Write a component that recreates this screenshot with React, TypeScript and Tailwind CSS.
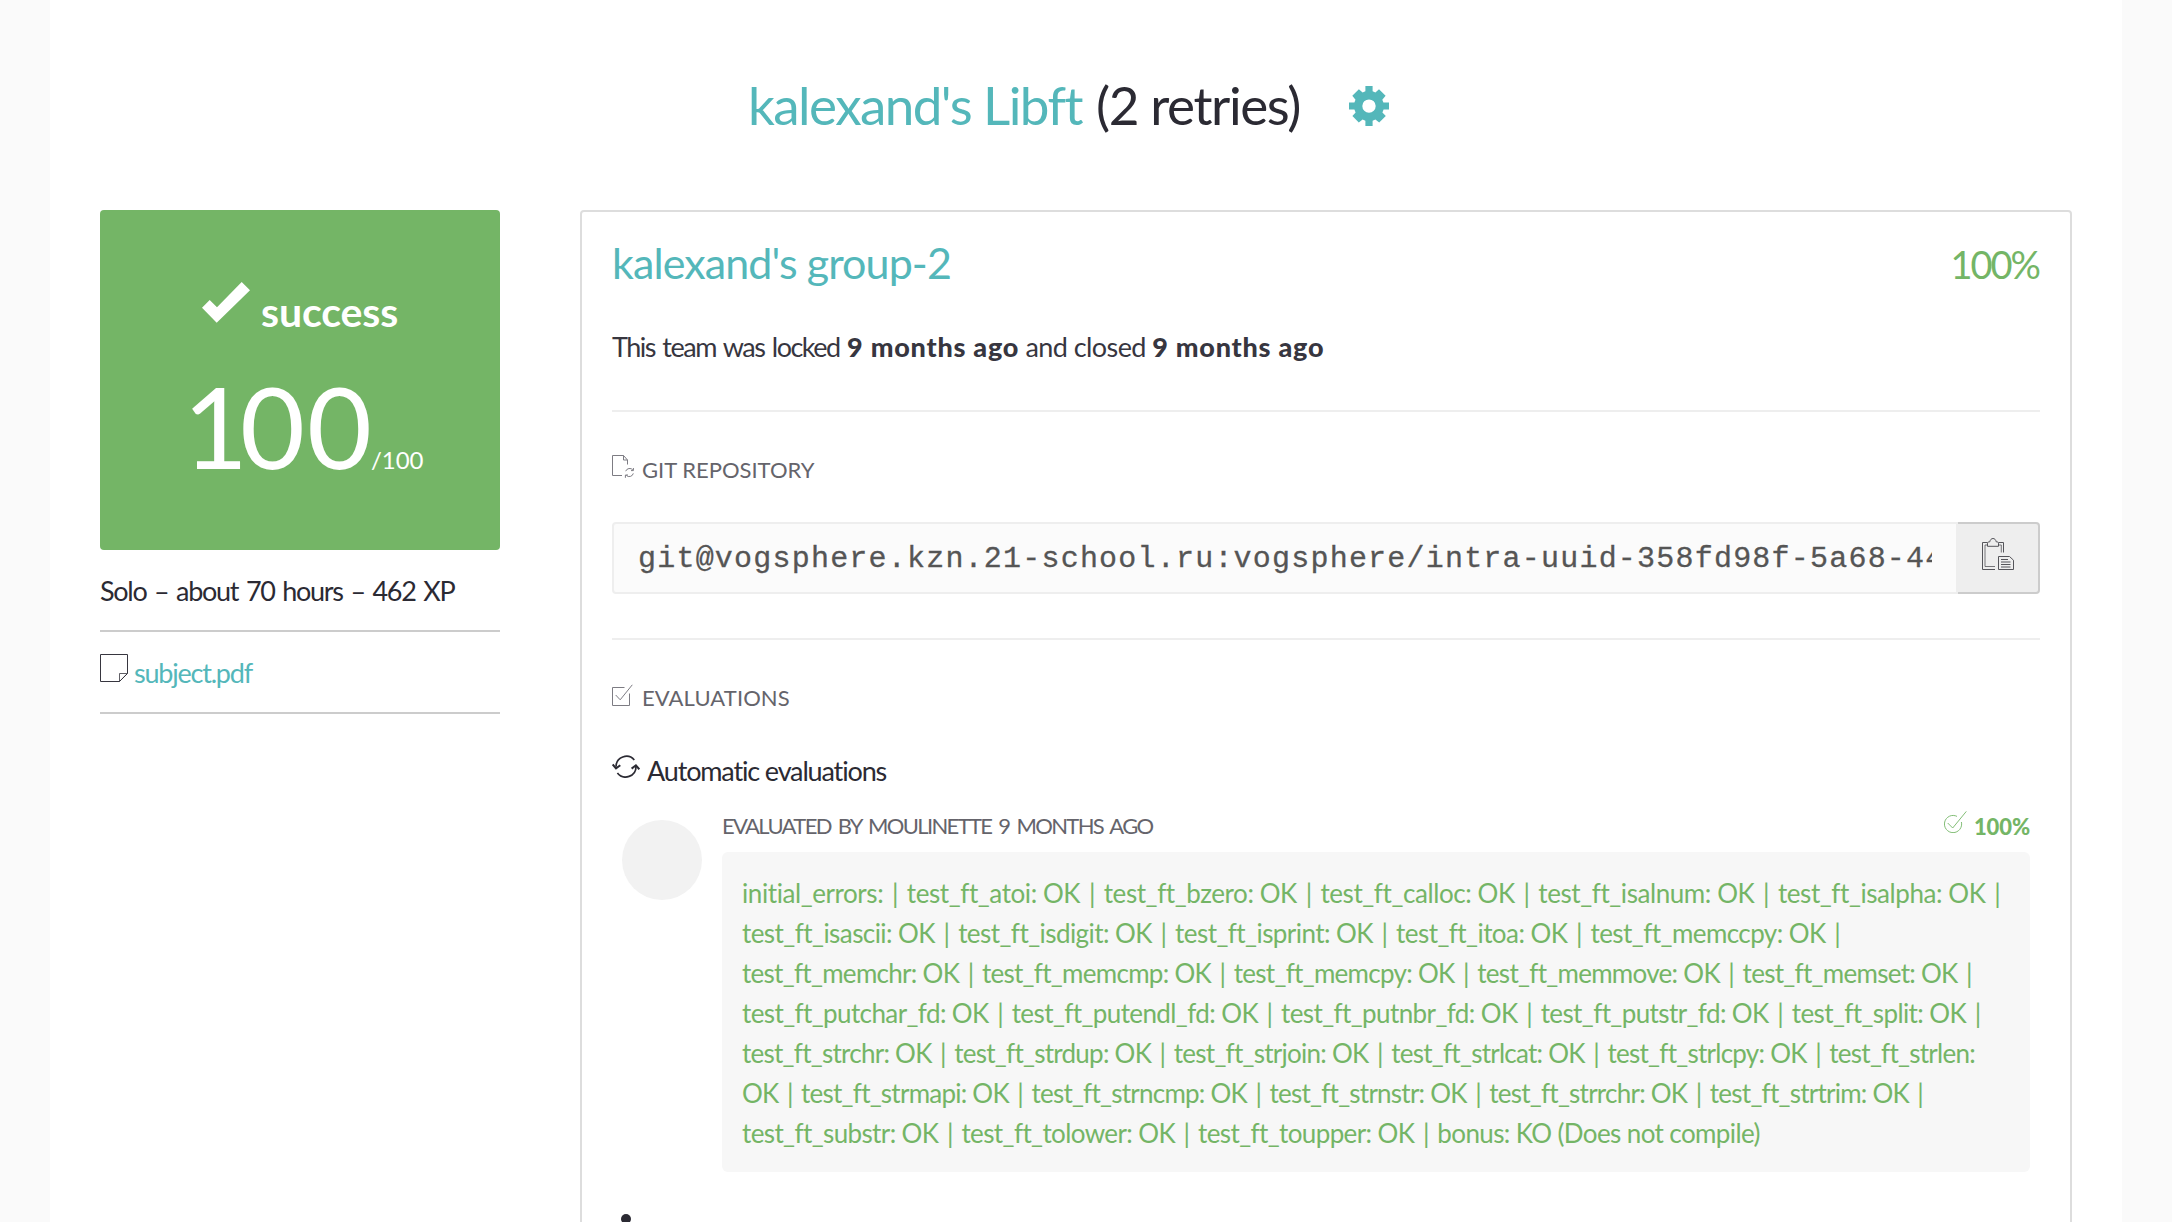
import type { ReactNode } from "react";

const MOULINETTE_LINES = [
  { text: "initial_errors: | test_ft_atoi: OK | test_ft_bzero: OK | test_ft_calloc: OK | test_ft_isalnum: OK | test_ft_isalpha: OK |", tracking: "tracking-[-0.42px]" },
  { text: "test_ft_isascii: OK | test_ft_isdigit: OK | test_ft_isprint: OK | test_ft_itoa: OK | test_ft_memccpy: OK |", tracking: "tracking-[-0.56px]" },
  { text: "test_ft_memchr: OK | test_ft_memcmp: OK | test_ft_memcpy: OK | test_ft_memmove: OK | test_ft_memset: OK |", tracking: "tracking-[-0.71px]" },
  { text: "test_ft_putchar_fd: OK | test_ft_putendl_fd: OK | test_ft_putnbr_fd: OK | test_ft_putstr_fd: OK | test_ft_split: OK |", tracking: "tracking-[-0.6px]" },
  { text: "test_ft_strchr: OK | test_ft_strdup: OK | test_ft_strjoin: OK | test_ft_strlcat: OK | test_ft_strlcpy: OK | test_ft_strlen:", tracking: "tracking-[-0.74px]" },
  { text: "OK | test_ft_strmapi: OK | test_ft_strncmp: OK | test_ft_strnstr: OK | test_ft_strrchr: OK | test_ft_strtrim: OK |", tracking: "tracking-[-0.76px]" },
  { text: "test_ft_substr: OK | test_ft_tolower: OK | test_ft_toupper: OK | bonus: KO (Does not compile)", tracking: "tracking-[-0.61px]" },
];

function GearIcon() {
  return (
    <svg viewBox="0 0 40 40" className="h-10 w-10 shrink-0 fill-[#54b7ba]">
      <path
        fillRule="evenodd"
        d="M16.4 0h7.2v5.2l2.8 1.2 3.6-3.2 6.6 6.6-3.3 4 1.1 2.6H40v7.2h-5.4l-1.2 2.8 3.4 3.7-6.6 6.3-3.8-2.8-2.8 1.2V40h-7.2v-5.2l-2.8-1.2-3.8 2.8-6.4-6.3 3.2-3.7-1.2-2.8H0v-7.2h5.4l1.1-2.6-3.2-4 6.6-6.6 3.7 3.2 2.8-1.2zM20 13.4a6.7 6.7 0 1 0 0 13.4 6.7 6.7 0 0 0 0-13.4z"
      />
    </svg>
  );
}

function CheckMark() {
  return (
    <svg viewBox="0 0 48 41" className="mt-[72px] h-[41px] w-12 shrink-0 fill-white">
      <path d="M39.7 0 48 8.3 14.7 40.8 0 25.8 7.7 18l7.3 7.2z" />
    </svg>
  );
}

function NoteIcon() {
  return (
    <svg viewBox="0 0 28 28" className="mt-[22px] h-7 w-7 shrink-0 fill-none stroke-[#37363f]">
      <path d="M.5.5h27v19l-8 8H.5z" />
      <path strokeWidth="0.8" d="M19.5 27.5v-8h8M19.5 27.5l7-7.2" />
    </svg>
  );
}

function FileSyncIcon() {
  return (
    <svg viewBox="0 0 23 24" className="-mt-[1px] h-6 w-[23px] shrink-0 fill-none stroke-[#7d7c83]">
      <path d="M10 20.5H.5V.5h11l4 4.5v4.5M11.5.5V5h4" />
      <path d="M13.7 16.2a4.2 4.2 0 0 1 7.2-1.2M21.3 18.4a4.2 4.2 0 0 1-7 2M21.4 13v2.6H19M13.4 22.8V20H16" />
    </svg>
  );
}

function CheckBoxIcon() {
  return (
    <svg viewBox="0 0 22 22" className="h-[22px] w-[22px] shrink-0 fill-none stroke-[#7d7c83]">
      <path d="M12.5 3.5H.5v18h17v-12" />
      <path d="m3.7 11 4.5 4.8L20.3.8" />
    </svg>
  );
}

function SyncIcon() {
  return (
    <svg viewBox="0 0 28 23" className="mt-[5px] h-[23px] w-7 shrink-0 fill-none stroke-[#2b2a33] stroke-[1.7]">
      <path d="M22.3 5A10.4 10.4 0 0 0 4 11.8M5.4 18a10.4 10.4 0 0 0 18.6-6.6" />
      <path strokeWidth="2" d="M.7 9.5 4 13.3l4.3-3M19.6 13.6l4.3-3.3 3.4 4" />
    </svg>
  );
}

function ClipboardIcon() {
  return (
    <svg viewBox="0 0 32 32" className="mt-[14px] h-8 w-8 shrink-0 fill-none stroke-[#55555a]">
      <path d="M13 31.5H.5v-27h5M16.5 4.5h5v10" />
      <path strokeWidth="0.8" d="M13 28.5H3V7h2.5M17 7h2.3v7.5" />
      <path d="M5.5 8.3V5.2c0-1 1-1.4 2.3-1.4C8.2 1.7 9.4.5 11 .5s2.8 1.2 3.2 3.3c1.4 0 2.3.4 2.3 1.4v3.1z" />
      <path d="M16.5 18.5h11l4 3.7v9.3h-15zM19 21.5h7M19 24h9.5M19 26.5h9.5M19 29h9.5" />
    </svg>
  );
}

function CircleCheckIcon() {
  return (
    <svg viewBox="0 0 23 22" className="h-[22px] w-[23px] shrink-0 fill-none stroke-[#74b566] stroke-[0.9]">
      <path d="M13 5.4A8.6 8.6 0 1 0 17.4 11" />
      <path d="m3.7 12 5 5L22.3.4" />
    </svg>
  );
}

function SectionTitle({ icon, children }: { icon: ReactNode; children: ReactNode }) {
  return (
    <h4 className="mt-11 flex h-[27px] text-[22px] leading-[27px] text-[#65646b]">
      <span className="flex w-[30px] shrink-0">{icon}</span>
      {children}
    </h4>
  );
}

function Divider() {
  return <div className="mt-11 h-[2px] bg-[#eeeeee]" />;
}

function Sidebar() {
  return (
    <aside className="w-[400px] shrink-0">
      <div className="h-[340px] rounded bg-[#74b566] text-white">
        <div className="flex h-[130px] pl-[102px]">
          <CheckMark />
          <span className="ml-[11px] mt-[82px] text-[41px] font-bold leading-[40px] tracking-[-0.1px]">success</span>
        </div>
        <div className="flex pl-[83px]">
          <span className="mt-[21px] text-[112px] leading-[130px] tracking-[2px]">
            <span className="tracking-[-8px]">1</span>00
          </span>
          <span className="-ml-[3px] mt-[105px] text-2xl leading-[30px]">/100</span>
        </div>
      </div>
      <p className="mt-[21px] h-[39px] whitespace-nowrap text-[27px] leading-[40px] tracking-[-1.28px] text-[#2b2a33] [word-spacing:2px]">
        Solo – about 70 hours – 462 XP
      </p>
      <div className="mt-5 h-[2px] bg-[#cccccc]" />
      <div className="flex h-20">
        <NoteIcon />
        <a className="ml-[6px] mt-[21px] text-[27px] leading-[40px] tracking-[-1.21px] text-[#54b7ba]">subject.pdf</a>
      </div>
      <div className="h-[2px] bg-[#cccccc]" />
    </aside>
  );
}

function Repository() {
  return (
    <div className="mt-[39px] flex h-[72px]">
      <div className="min-w-0 flex-1 rounded-l-sm border-2 border-[#eeeeee] bg-[#fbfbfb] px-6">
        <div className="overflow-hidden whitespace-nowrap pt-[2px] font-['Liberation_Mono',monospace] text-[30px] leading-[66px] tracking-[1.21px] text-[#555555] [-webkit-text-stroke:0.3px_#555555]">
          git@vogsphere.kzn.21-school.ru:vogsphere/intra-uuid-358fd98f-5a68-44
        </div>
      </div>
      <button className="flex w-[82px] shrink-0 justify-center rounded-r-sm border-2 border-l-0 border-[#cccccc] bg-[#eeeeee]">
        <ClipboardIcon />
      </button>
    </div>
  );
}

function Evaluation() {
  return (
    <div className="mt-[22px] flex pl-[10px] pr-[10px]">
      <div className="mt-[9px] h-20 w-20 shrink-0 rounded-full bg-[#f2f2f2]" />
      <div className="ml-5 flex-1">
        <div className="flex h-[29px] justify-between whitespace-nowrap text-[22px] leading-[30px]">
          <span className="tracking-[-1.65px] text-[#65646b] [word-spacing:3px]">EVALUATED BY MOULINETTE 9 MONTHS AGO</span>
          <span className="flex gap-[7px] font-black tracking-[-0.1px] text-[#74b566]">
            <CircleCheckIcon />
            <span className="pt-[1px]">100%</span>
          </span>
        </div>
        <div className="mt-3 h-[320px] rounded-md bg-[#f7f7f7] px-5 pt-[21px] text-[26px] leading-[40px] text-[#74b566]">
          {MOULINETTE_LINES.map((line) => (
            <div key={line.text} className={`whitespace-nowrap ${line.tracking}`}>
              {line.text.split(/(\|)/).map((part, i) =>
                part === "|" ? (
                  <span key={i} className="mx-[2.5px]">|</span>
                ) : (
                  part
                ),
              )}
            </div>
          ))}
        </div>
      </div>
    </div>
  );
}

export default function App() {
  return (
    <div className="h-[1222px] overflow-hidden bg-[#fafafa] px-[50px] font-[Lato,sans-serif]">
      <main className="h-[1222px] overflow-hidden bg-white px-[50px]">
        <h1 className="flex h-[210px] whitespace-nowrap pl-[648px] pt-[75px] text-[53px] leading-[60px]">
          <span className="w-[348px] tracking-[-1.57px] text-[#54b7ba]">kalexand's Libft</span>
          <span className="w-[253px] tracking-[-1.4px] text-[#2b2a33]">(2 retries)</span>
          <span className="mt-[11px] flex"><GearIcon /></span>
        </h1>
        <div className="flex gap-20">
          <Sidebar />
          <section className="h-[1040px] min-w-0 flex-1 rounded-sm border-2 border-[#dddddd] px-[30px] pt-[21px]">
            <div className="flex h-[59px] justify-between leading-[60px]">
              <h2 className="text-[43px] tracking-[-0.9px] text-[#54b7ba]">kalexand's group-2</h2>
              <span className="mr-[1px] mt-[1px] text-[38px] tracking-[-2px] text-[#74b566]">100%</span>
            </div>
            <p className="mt-[35px] flex h-[39px] whitespace-pre text-[27px] leading-[40px] text-[#37363f]">
              <span className="tracking-[-1.5px] [word-spacing:2px]">{"This team was locked "}</span>
              <b className="font-black tracking-[0.76px]">9 months ago</b>
              <span className="tracking-[-0.58px]">{" and closed "}</span>
              <b className="font-black tracking-[0.76px]">9 months ago</b>
            </p>
            <Divider />
            <SectionTitle icon={<FileSyncIcon />}>
              <span>GIT REPOSITORY</span>
            </SectionTitle>
            <Repository />
            <Divider />
            <SectionTitle icon={<CheckBoxIcon />}>
              <span className="tracking-[0.1px]">EVALUATIONS</span>
            </SectionTitle>
            <div className="mt-[39px] flex h-[39px] text-[27px] leading-[39px] tracking-[-1.15px] text-[#2b2a33]">
              <SyncIcon />
              <span className="ml-[7px] pt-[1px]">Automatic evaluations</span>
            </div>
            <Evaluation />
            <div className="mt-[42px] flex text-[27px] leading-[39px] tracking-[-0.9px] text-[#2b2a33]">
              <svg viewBox="0 0 28 28" className="h-7 w-7 shrink-0 fill-[#2b2a33]">
                <circle cx="14" cy="5" r="5" />
                <path d="M5 28c0-10 3-16 9-16s9 6 9 16z" />
              </svg>
              <span className="-mt-[1px] ml-[6px]">Peer evaluations</span>
            </div>
          </section>
        </div>
      </main>
    </div>
  );
}
